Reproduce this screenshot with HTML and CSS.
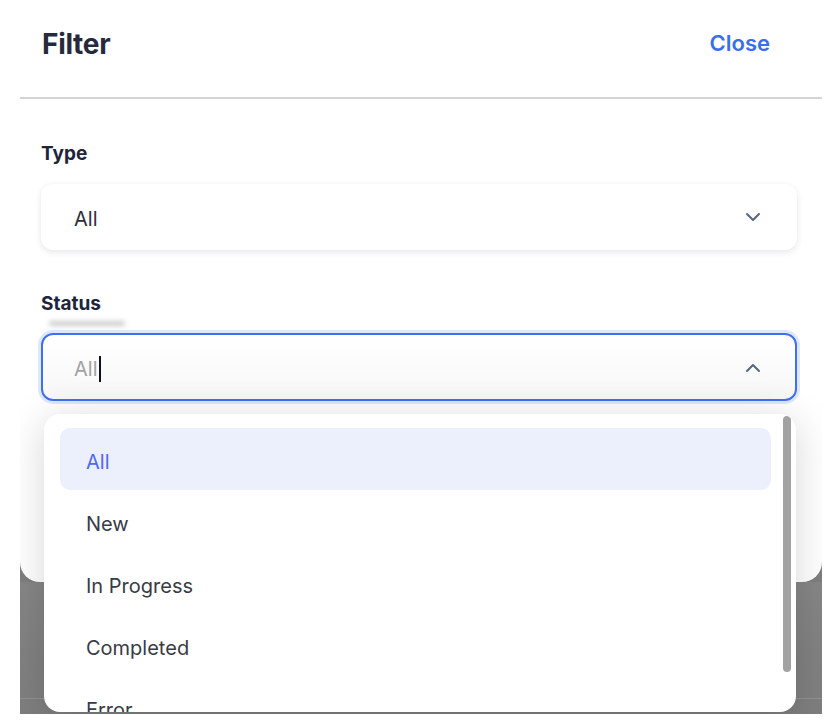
FILE: index.html
```html
<!DOCTYPE html>
<html>
<head>
<meta charset="utf-8">
<link rel="stylesheet" href="styles.css">
</head>
<body>
<div class="screen">
  <div class="sheet">
    <div class="header">
      <div class="title">Filter</div>
      <div class="close">Close</div>
    </div>
    <div class="body">
      <div class="label">Type</div>
      <div class="select">
        <span class="value">All</span>
        <svg class="chev" width="16" height="10" viewBox="0 0 16 10"><path d="M2 2 L8 8 L14 2" fill="none" stroke="#56677d" stroke-width="2" stroke-linecap="round" stroke-linejoin="round"/></svg>
      </div>
      <div class="label status-label">Status</div>
      <div class="select focused">
        <span class="placeholder">All</span><span class="caret"></span>
        <svg class="chev" width="16" height="10" viewBox="0 0 16 10"><path d="M2 8 L8 2 L14 8" fill="none" stroke="#56677d" stroke-width="2" stroke-linecap="round" stroke-linejoin="round"/></svg>
      </div>
    </div>
  </div>
  <div class="backdrop">
    <div class="row"></div>
    <div class="row"></div>
  </div>
  <div class="menu">
    <div class="option active">All</div>
    <div class="option">New</div>
    <div class="option">In Progress</div>
    <div class="option">Completed</div>
    <div class="option">Error</div>
    <div class="scrollbar"></div>
  </div>
</div>
</body>
</html>
```
FILE: styles.css
```css
html, body {
  margin: 0;
  padding: 0;
  background: #ffffff;
}
body {
  font-family: Inter, "Noto Sans", sans-serif;
  width: 828px;
  height: 720px;
  overflow: hidden;
}
.screen {
  position: relative;
  margin-left: 20px;
  width: 802px;
  height: 714px;
  background: #7e7e7e;
  display: flex;
  flex-direction: column;
  overflow: hidden;
}
.sheet {
  background: #ffffff;
  height: 582px;
  border-radius: 0 0 20px 20px;
  flex: none;
}
.header {
  height: 99px;
  border-bottom: 2px solid #d4d4d6;
  display: flex;
  align-items: center;
  justify-content: space-between;
  padding: 0 52px 10px 22px;
  box-sizing: border-box;
}
.title {
  font-size: 28px;
  font-weight: 700;
  color: #262a3c;
  letter-spacing: -0.3px;
}
.close {
  font-size: 22px;
  font-weight: 600;
  color: #3a6ef0;
  margin-left: -3px;
  margin-top: -1px;
}
.body {
  padding: 42px 25px 0 21px;
}
.label {
  font-size: 19px;
  font-weight: 700;
  color: #20243a;
  height: 24px;
  line-height: 24px;
  padding-top: 1px;
}
.select {
  margin-top: 18px;
  height: 66px;
  border-radius: 12px;
  background: #ffffff;
  box-shadow: 0 2px 6px rgba(30, 40, 60, 0.12);
  display: flex;
  align-items: center;
  padding: 3px 36px 0 33px;
  box-sizing: border-box;
  font-size: 20px;
  color: #2c2f3a;
}
.select .chev {
  margin-top: -3px;
}
.value {
  flex: 1;
}
.status-label {
  margin-top: 41px;
  position: relative;
}
.status-label::after {
  content: "";
  position: absolute;
  left: 8px;
  top: 30px;
  width: 76px;
  height: 5px;
  border-radius: 3px;
  background: rgba(0, 0, 0, 0.2);
  filter: blur(2.5px);
}
.select.focused {
  margin-top: 17px;
  height: 68px;
  border: 2px solid #3f6ff2;
  box-shadow: 0 0 0 3px #dfe7fd;
  background: linear-gradient(#ffffff, #f7f7f7);
  padding: 4px 34px 0 31px;
}
.placeholder {
  color: #a2a2a6;
}
.caret {
  display: inline-block;
  width: 2px;
  height: 26px;
  background: #111;
  margin-left: 1px;
  flex: none;
}
.focused .chev {
  margin-left: auto;
  margin-top: -2px;
}
.backdrop {
  flex: 1;
  background: linear-gradient(#868686, #7a7a7a);
  padding-top: 43px;
}
.row {
  height: 74px;
  border-bottom: 1px solid #909090;
  box-sizing: border-box;
}
.menu {
  position: absolute;
  left: 24px;
  top: 414px;
  width: 752px;
  height: 298px;
  border-radius: 16px;
  background: #ffffff;
  box-shadow: 0 6px 40px rgba(0, 0, 0, 0.16);
  padding: 14px 25px 0 16px;
  box-sizing: border-box;
  overflow: hidden;
}
.option {
  height: 62px;
  display: flex;
  align-items: center;
  padding: 5px 0 0 26px;
  box-sizing: border-box;
  font-size: 20px;
  color: #383b46;
  border-radius: 10px;
}
.option.active {
  background: #ecf0fc;
  color: #4a6cf0;
}
.scrollbar {
  position: absolute;
  right: 5px;
  top: 2px;
  width: 8px;
  height: 256px;
  border-radius: 4px;
  background: #a2a2a2;
}
```
